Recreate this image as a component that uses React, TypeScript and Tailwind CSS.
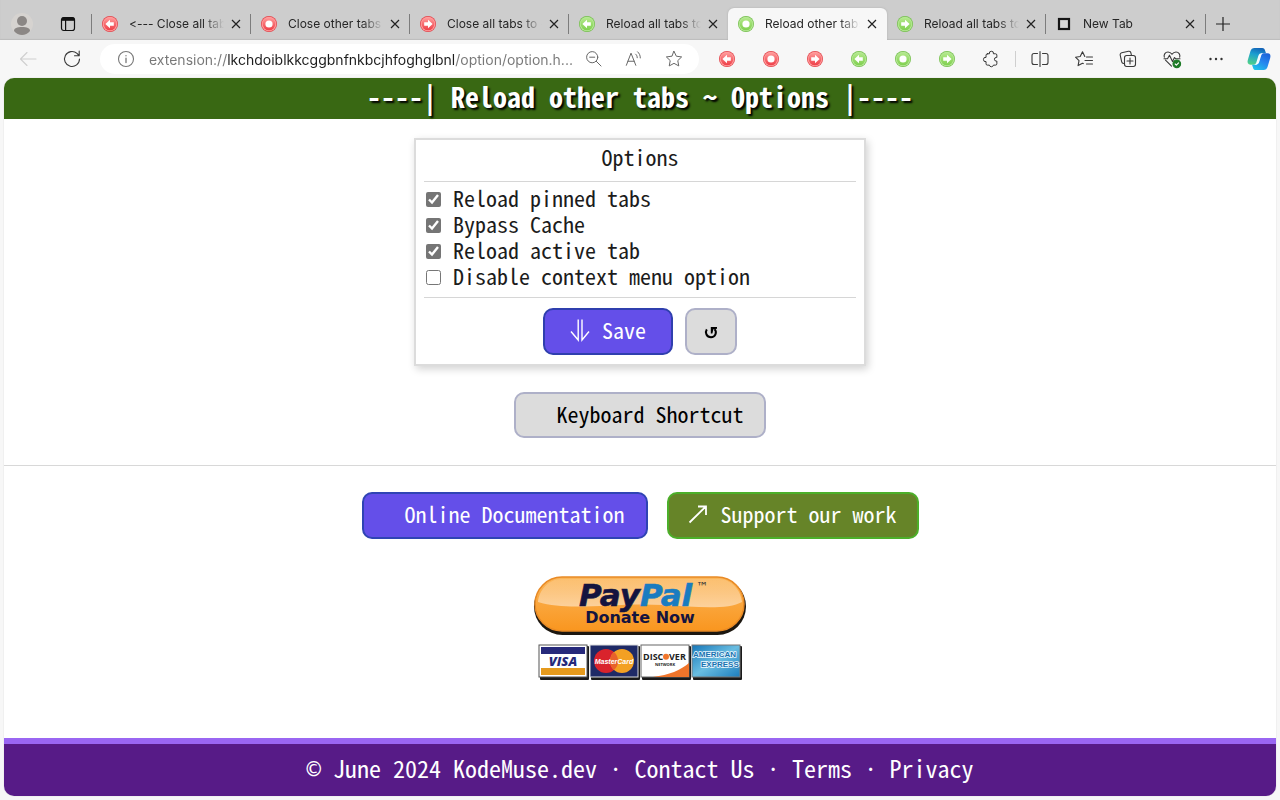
import { useId, useState } from 'react';
import type { ReactNode } from 'react';

type Shape = 'left' | 'dot' | 'right';

const tabs: { title: string; color?: 'red' | 'green'; shape?: Shape; active?: boolean }[] = [
  { title: '<--- Close all tabs', color: 'red', shape: 'left' },
  { title: 'Close other tabs', color: 'red', shape: 'dot' },
  { title: 'Close all tabs to --->', color: 'red', shape: 'right' },
  { title: 'Reload all tabs to left', color: 'green', shape: 'left' },
  { title: 'Reload other tabs', color: 'green', shape: 'dot', active: true },
  { title: 'Reload all tabs to right', color: 'green', shape: 'right' },
  { title: 'New Tab' },
];

const extensions: { name: string; color: 'red' | 'green'; shape: Shape }[] = [
  { name: 'Close all tabs to left', color: 'red', shape: 'left' },
  { name: 'Close other tabs', color: 'red', shape: 'dot' },
  { name: 'Close all tabs to right', color: 'red', shape: 'right' },
  { name: 'Reload all tabs to left', color: 'green', shape: 'left' },
  { name: 'Reload other tabs', color: 'green', shape: 'dot' },
  { name: 'Reload all tabs to right', color: 'green', shape: 'right' },
];

function Orb({ color, shape }: { color: 'red' | 'green'; shape: Shape }) {
  const id = useId();
  const red = color === 'red';
  return (
    <svg className="size-4 shrink-0" viewBox="0 0 16 16">
      <defs>
        <linearGradient id={id} x1="0" y1="0" x2="0" y2="1">
          <stop offset="0" stopColor={red ? '#ff9a9a' : '#b4e98c'} />
          <stop offset="1" stopColor={red ? '#ee3f48' : '#80d04f'} />
        </linearGradient>
      </defs>
      <circle cx="8" cy="8" r="8" fill={red ? '#e2434a' : '#74bf4b'} />
      <circle cx="8" cy="8" r="7.300" fill={red ? '#ff9c9c' : '#b5e796'} />
      <circle cx="8" cy="8" r="6.300" fill={`url(#${id})`} />
      {shape === 'dot' && <circle cx="8" cy="8" r="3.600" fill="#fff" />}
      {shape === 'left' && <path d="M3.400 8 8 3.700v2.500h3.800v3.600H8v2.500z" fill="#fff" />}
      {shape === 'right' && <path d="M12.600 8 8 3.700v2.500H4.200v3.600H8v2.500z" fill="#fff" />}
    </svg>
  );
}

function LineIcon({ children, className = 'size-5 text-[#3a3a3a]' }: { children: ReactNode; className?: string }) {
  return (
    <svg
      className={className}
      viewBox="0 0 20 20"
      fill="none"
      stroke="currentColor"
      strokeWidth="1.100"
      strokeLinecap="round"
      strokeLinejoin="round"
    >
      {children}
    </svg>
  );
}

function ToolButton({ label, children, className = 'w-11' }: { label: string; children: ReactNode; className?: string }) {
  return (
    <button aria-label={label} className={`flex h-8 shrink-0 items-center justify-center ${className}`}>
      {children}
    </button>
  );
}

function TabStrip() {
  return (
    <div className="flex h-10 items-end bg-[#cdcdcd] shadow-[inset_0_-1px_1px_#bdbdbd]">
      <ToolButton label="Profile">
        <svg className="size-[22px]" viewBox="0 0 22 22">
          <circle cx="11" cy="11" r="11" fill="#d6d3d0" />
          <circle cx="11" cy="8" r="5" fill="#8b8785" />
          <path d="M3 18c0-3 3-4 8-4s8 1 8 4c-2 2.600-5 4-8 4s-6-1.400-8-4z" fill="#8b8785" />
        </svg>
      </ToolButton>
      <ToolButton label="Tab actions" className="w-12">
        <svg className="size-4" viewBox="0 0 16 16" fill="none" stroke="#111" strokeWidth="1.200">
          <rect x="1.500" y="1.500" width="13" height="13" rx="2.200" />
          <path d="M2 3.200h12" strokeWidth="3.200" />
          <path d="M5.600 4v10.500" />
        </svg>
      </ToolButton>
      {tabs.map((tab, i) => (
        <div
          key={tab.title}
          className={`relative flex h-8 min-w-0 max-w-[159px] flex-1 items-center pr-[7px] pl-[10px] ${
            tab.active ? 'rounded-t-md bg-[#f7f7f7] shadow-[0_0_2px_#aaa] [clip-path:inset(-3px_-3px_0_-3px)]' : ''
          }`}
        >
          {!tab.active && !tabs[i - 1]?.active && <span className="absolute -left-px h-5 w-px bg-[#7c7c7c]" />}
          {tab.color && tab.shape ? (
            <Orb color={tab.color} shape={tab.shape} />
          ) : (
            <svg className="size-4 shrink-0" viewBox="0 0 16 16">
              <rect x="3" y="3" width="10" height="10" fill="#d8d8d8" stroke="#151515" strokeWidth="2.200" />
            </svg>
          )}
          <button className="ml-[11px] min-w-0 flex-1 overflow-hidden text-left text-[12px] whitespace-nowrap text-[#262626] [font-feature-settings:'calt'_0] [mask-image:linear-gradient(90deg,#000_78%,transparent)]">
            {tab.title}
          </button>
          <button aria-label={`Close ${tab.title}`} className="ml-1 flex size-4 items-center justify-center">
            <svg className="size-[10px]" viewBox="0 0 10 10" stroke="#222" strokeWidth="1.200">
              <path d="m1 1 8 8M9 1 1 9" />
            </svg>
          </button>
        </div>
      ))}
      <div className="relative flex h-8 w-9 items-center justify-center">
        <span className="absolute left-0 h-5 w-px bg-[#7c7c7c]" />
        <button aria-label="New tab">
          <svg className="size-[14px]" viewBox="0 0 14 14" stroke="#222" strokeWidth="1.200">
            <path d="M7 0v14M0 7h14" />
          </svg>
        </button>
      </div>
    </div>
  );
}

function Copilot() {
  return (
    <svg className="size-6" viewBox="0 0 24 24">
      <defs>
        <linearGradient id="copilotLeft" x1=".6" y1="0" x2=".3" y2="1">
          <stop offset="0" stopColor="#1464b8" />
          <stop offset=".4" stopColor="#1b9fd0" />
          <stop offset="1" stopColor="#4fd08a" />
        </linearGradient>
        <linearGradient id="copilotRight" x1=".9" y1="0" x2=".3" y2="1">
          <stop offset="0" stopColor="#1c5fd6" />
          <stop offset=".5" stopColor="#2584ee" />
          <stop offset="1" stopColor="#20c0ea" />
        </linearGradient>
      </defs>
      <path d="M7.500 1h7.800c1.400 0 2.200.8 2.600 2.100L19 6.300h-3.600c-1.600 0-2.400.9-2.900 2.400l-2.200 6.800c-.6 1.600-1.300 2.200-3 2.200H3.600C.9 17.700 0 15.700.8 13l2.700-9C4.200 2 5.300 1 7.500 1z" fill="url(#copilotLeft)" />
      <path d="M16.500 23H8.700c-1.400 0-2.200-.8-2.600-2.100L5 17.700h3.600c1.600 0 2.400-.9 2.900-2.400l2.200-6.800c.6-1.600 1.300-2.200 3-2.200h3.700c2.700 0 3.600 2 2.800 4.700l-2.700 9c-.7 2-1.800 3-4 3z" fill="url(#copilotRight)" />
      <path d="M11.300 9c.6-2 1.800-2.700 3.700-2.700h1.700c-1.500.2-2 .9-2.500 2.200l-2 6.500c-.6 2-1.800 2.700-3.700 2.700H6.800c1.500-.2 2-.9 2.500-2.200z" fill="#f4fbff" />
    </svg>
  );
}

function Toolbar() {
  const [url, setUrl] = useState('extension://lkchdoiblkkcggbnfnkbcjhfoghglbnl/option/option.h...');
  return (
    <div className="flex h-[38px] items-center">
      <ToolButton label="Back" className="w-14">
        <LineIcon className="size-5 text-[#cfcfcf]">
          <path d="M18 10H2.500M9 3.500 2.500 10 9 16.500" />
        </LineIcon>
      </ToolButton>
      <ToolButton label="Refresh" className="w-8">
        <LineIcon>
          <path d="M17.500 10A7.500 7.500 0 1 1 15 4.400L17 6.500M17.200 2v4.700h-4.700" />
        </LineIcon>
      </ToolButton>
      <div className="ml-3 flex h-[30px] min-w-0 flex-1 items-center rounded-full bg-white pr-[5px] pl-4">
        <LineIcon className="size-5 shrink-0 text-[#777]">
          <circle cx="10" cy="10" r="7.500" />
          <path d="M10 9.200v4.300M10 6.600v.2" strokeWidth="1.300" />
        </LineIcon>
        <input
          aria-label="Address"
          value={url}
          onChange={(e) => setUrl(e.target.value)}
          className="ml-[13px] min-w-0 flex-1 bg-[linear-gradient(90deg,#777_78px,#1d1d1d_78px,#1d1d1d_306px,#777_306px)] bg-clip-text text-[14px] text-transparent outline-none"
        />
        <ToolButton label="Zoom out" className="w-10">
          <LineIcon className="size-[18px] text-[#666]">
            <circle cx="8" cy="8" r="6.200" />
            <path d="m12.600 12.600 5.200 5.200M5.200 8h5.600" />
          </LineIcon>
        </ToolButton>
        <ToolButton label="Read aloud" className="w-10">
          <LineIcon className="size-[18px] text-[#666]">
            <path d="m1.500 17 5.200-13.500L12 17M3.200 12.500h7M11.800 4.600c1.200 1 1.800 2.300 1.800 4M14 2c2 1.700 3 4 3 6.800" />
          </LineIcon>
        </ToolButton>
        <ToolButton label="Add to favorites" className="w-10">
          <LineIcon className="size-[18px] text-[#666]">
            <path d="m10 1.500 2.600 5.400 5.900.8-4.300 4.100 1.100 5.900-5.300-2.900-5.300 2.900 1.100-5.900L1.500 7.700l5.900-.8z" />
          </LineIcon>
        </ToolButton>
      </div>
      <div className="ml-[6px] flex items-center">
        {extensions.map((ext) => (
          <ToolButton key={ext.name} label={ext.name}>
            <Orb color={ext.color} shape={ext.shape} />
          </ToolButton>
        ))}
        <ToolButton label="Extensions">
          <LineIcon className="size-[18px] text-[#333]">
            <path d="M6 4.200h2.200a2.300 2.300 0 1 1 4.500 0H15a1.500 1.500 0 0 1 1.500 1.500v2.600h-.7a1.900 1.900 0 0 0 0 4h.7v3A1.500 1.500 0 0 1 15 16.800h-2.300a2.300 2.300 0 0 1-4.500 0H6a1.500 1.500 0 0 1-1.500-1.500v-2.400a2.400 2.400 0 1 1 0-4.700V5.700A1.500 1.500 0 0 1 6 4.200z" />
          </LineIcon>
        </ToolButton>
        <span className="mx-[2px] h-4 w-px bg-[#cfcfcf]" />
        <ToolButton label="Split screen">
          <LineIcon>
            <path d="M10 2.500v15M7.500 4.500H4a2 2 0 0 0-2 2v7a2 2 0 0 0 2 2h3.500M12.500 4.500H16a2 2 0 0 1 2 2v7a2 2 0 0 1-2 2h-3.500" />
          </LineIcon>
        </ToolButton>
        <ToolButton label="Favorites">
          <LineIcon>
            <path d="M10.800 7.500 8.500 2.800 6.200 7.500l-4.700.7L5 11.600l-.9 5 4.400-2.400.8.4M12.500 8h6M11 11.500h7.500M12.500 15h6" />
          </LineIcon>
        </ToolButton>
        <ToolButton label="Collections">
          <LineIcon>
            <rect x="6.500" y="6.500" width="11" height="11" rx="2.200" />
            <path d="M12 9v6M9 12h6M6.500 14.500h-.8a2 2 0 0 1-2-1.600L2.200 6.200a2 2 0 0 1 1.500-2.400l6.800-1.500a2 2 0 0 1 2.400 1.500l.6 2.700" />
          </LineIcon>
        </ToolButton>
        <ToolButton label="Browser essentials">
          <LineIcon>
            <path d="M2.300 8.200C1.500 5.500 3.300 3 6 3c1.700 0 3 .9 4 2.300C11 3.900 12.300 3 14 3c2.700 0 4.500 2.500 3.700 5.200M3.500 11.200l6 6M2 9.700h3.500l2-3.500 3 6.300 2-4 1 1.200H18" />
            <circle cx="14.800" cy="14.800" r="3.800" fill="#1c7a26" stroke="#1c7a26" />
            <path d="m13.200 15 1.200 1.200 2.200-2.400" stroke="#fff" />
          </LineIcon>
        </ToolButton>
        <ToolButton label="Settings and more">
          <svg className="size-4 text-[#333]" viewBox="0 0 16 16" fill="currentColor">
            <circle cx="2.500" cy="8" r="1.200" />
            <circle cx="8" cy="8" r="1.200" />
            <circle cx="13.500" cy="8" r="1.200" />
          </svg>
        </ToolButton>
        <ToolButton label="Copilot" className="w-[42px]">
          <Copilot />
        </ToolButton>
      </div>
    </div>
  );
}

function PayPalBadge() {
  return (
    <svg className="h-[116px] w-[216px]" viewBox="0 0 216 116" role="img" aria-label="Donate with PayPal">
      <defs>
        <linearGradient id="pill" x1="0" y1="0" x2="0" y2="1">
          <stop offset="0" stopColor="#fbb65a" />
          <stop offset="1" stopColor="#f9961f" />
        </linearGradient>
        <linearGradient id="gloss" x1="0" y1="0" x2="0" y2="1">
          <stop offset="0" stopColor="#fff" stopOpacity=".15" />
          <stop offset="1" stopColor="#fff" stopOpacity=".5" />
        </linearGradient>
        <linearGradient id="amex" x1="0" y1="0" x2="1" y2="1">
          <stop offset="0" stopColor="#1676b8" />
          <stop offset=".5" stopColor="#69bde1" />
          <stop offset="1" stopColor="#1c7dbd" />
        </linearGradient>
      </defs>
      <rect x="2" y="4" width="212" height="57" rx="28.500" fill="#1c1710" />
      <rect x="3" y="3" width="209" height="54" rx="27" fill="url(#pill)" stroke="#e98a25" strokeWidth="1.500" />
      <path d="M29 5h158c12 0 22 11 23 23-14 8-46 5-78 3-50-3-93 7-126-3C7 16 17 5 29 5z" fill="url(#gloss)" />
      <text x="47" y="32" fontFamily="'DejaVu Sans', sans-serif" fontWeight="700" fontStyle="italic" fontSize="31" fill="#14143f" stroke="#14143f" strokeWidth=".6">
        Pay<tspan fill="#1a7cc0" stroke="#1a7cc0">Pal</tspan>
      </text>
      <text x="164" y="17" fontFamily="'DejaVu Sans', sans-serif" fontSize="12" fill="#333">™</text>
      <text x="108" y="49" textAnchor="middle" fontFamily="'DejaVu Sans', sans-serif" fontWeight="700" fontSize="16" fill="#14143f">
        Donate Now
      </text>

      {/* Visa */}
      <rect x="8" y="72" width="49" height="34" rx="1" fill="#1a1a1a" />
      <rect x="7" y="71" width="48" height="32" fill="#fff" stroke="#555" />
      <path d="M9 73h44v7H9z" fill="#26297b" />
      <path d="M9 94h44v7H9z" fill="#e59a1d" />
      <text x="31" y="92" textAnchor="middle" fontFamily="'Open Sans', sans-serif" fontWeight="800" fontStyle="italic" fontSize="13" fill="#26297b">VISA</text>

      {/* MasterCard */}
      <rect x="59" y="72" width="49" height="34" rx="1" fill="#1a1a1a" />
      <rect x="58" y="71" width="48" height="32" fill="#1f2a66" stroke="#ddd" />
      <circle cx="74" cy="87" r="12" fill="#d9232c" />
      <circle cx="90" cy="87" r="12" fill="#f3a023" />
      <path d="M82 78a12 12 0 0 1 0 18 12 12 0 0 1 0-18z" fill="#e8622a" />
      <text x="82" y="90" textAnchor="middle" fontFamily="'Liberation Sans', sans-serif" fontWeight="700" fontStyle="italic" fontSize="7" fill="#fff">MasterCard</text>

      {/* Discover */}
      <rect x="110" y="72" width="49" height="34" rx="1" fill="#1a1a1a" />
      <rect x="109" y="71" width="48" height="32" fill="#fff" stroke="#666" />
      <path d="M121 103c16-2 28-7 36-14v14z" fill="#f0752b" />
      <g fontFamily="'Open Sans', sans-serif" fontWeight="700" fill="#222">
        <text x="111" y="86" fontSize="9">DISC</text>
        <text x="137" y="86" fontSize="9">VER</text>
        <text x="133" y="92" fontSize="4" textAnchor="middle">NETWORK</text>
      </g>
      <circle cx="134" cy="82.800" r="3" fill="#f0752b" />

      {/* American Express */}
      <rect x="161" y="72" width="49" height="34" rx="1" fill="#1a1a1a" />
      <rect x="160" y="71" width="48" height="32" fill="url(#amex)" stroke="#777" />
      <g fontFamily="'Liberation Sans', sans-serif" fontWeight="700" fontSize="8" fill="#1872b0" stroke="#e8f6fd" strokeWidth="1.600" paintOrder="stroke">
        <text x="161" y="83">AMERICAN</text>
        <text x="169" y="93">EXPRESS</text>
      </g>
    </svg>
  );
}

const optionLabels = ['Reload pinned tabs', 'Bypass Cache', 'Reload active tab', 'Disable context menu option'];

function OptionsCard() {
  const [checked, setChecked] = useState([true, true, true, false]);
  const toggle = (i: number) => setChecked(checked.map((c, j) => (j === i ? !c : c)));

  return (
    <section className="w-full max-w-[452px] border-2 border-[#dcdcdc] bg-white px-2 shadow-[2px_3px_8px_rgba(0,0,0,0.18)]">
      <h2 className="pb-[9px] text-center leading-8">Options</h2>
      <hr className="border-[#d6d6d6]" />
      <div className="flex flex-col pt-1 pb-[7px]">
        {optionLabels.map((label, i) => (
          <label key={label} className="flex items-center gap-3 pl-[2px]">
            <input
              type="checkbox"
              checked={checked[i]}
              onChange={() => toggle(i)}
              className="size-[15px] accent-[#757575]"
            />
            <span className="pb-1 leading-[22px]">{label}</span>
          </label>
        ))}
      </div>
      <hr className="border-[#d6d6d6]" />
      <div className="flex justify-center gap-3 pt-[10px] pb-[9px]">
        <button className="flex h-[47px] w-[130px] items-center justify-center gap-3 rounded-[10px] border-2 border-[#2f3fae] bg-[#644fe9] pb-1 text-white">
          <svg className="h-6 w-5" viewBox="0 0 20 24" fill="none" stroke="currentColor" strokeWidth="1.400">
            <path d="M8.200 1.500V22L1 13.500M12 1.500V22l7-8.500" />
          </svg>
          Save
        </button>
        <button
          aria-label="Reset"
          className="flex h-[47px] w-[52px] items-center justify-center rounded-[10px] border-2 border-[#aeb0c8] bg-[#dcdcdc]"
        >
          <svg className="size-4" viewBox="0 0 16 16">
            <path d="M3.800 5.400C1.700 8.600 3.600 13.200 8 13.200s6.300-4.900 3.600-8" fill="none" stroke="#000" strokeWidth="2" />
            <path d="M7.800 3h6.200v1.800l-3.600.4-1 4.300H7.800z" fill="#000" />
          </svg>
        </button>
      </div>
    </section>
  );
}

export default function App() {
  return (
    <div className="flex min-h-screen flex-col bg-[#f7f7f7] font-['Inter',sans-serif]">
      <TabStrip />
      <Toolbar />
      <div className="mx-1 mb-1 flex flex-1 flex-col overflow-hidden rounded-[10px] bg-white font-['Noto_Sans_Mono_CJK_JP','Noto_Sans_Mono','DejaVu_Sans_Mono',monospace] text-[22px] text-[#1c1c1c] shadow-[0_0_1px_#bbb]">
        <header className="bg-[#396813] pb-1 text-center text-white">
          <h1 className="text-[28px] leading-[37px] font-bold [text-shadow:2px_2px_2px_#000]">
            ----| Reload other tabs ~ Options |----
          </h1>
        </header>

        <main className="flex flex-1 flex-col items-center pt-[19px]">
          <OptionsCard />
          <button className="mt-[26px] h-[46px] w-[252px] rounded-[10px] border-2 border-[#aeb0c8] bg-[#dcdcdc] pb-1 pl-5 text-black">
            Keyboard Shortcut
          </button>
          <hr className="mt-[27px] w-full border-[#d8d8d8]" />
          <div className="mt-[26px] flex gap-[19px]">
            <a
              href="#documentation"
              className="flex h-[47px] w-[286px] items-center justify-center rounded-[10px] border-2 border-[#2f44b4] bg-[#644fe9] pb-1 pl-5 text-white"
            >
              Online Documentation
            </a>
            <a
              href="#support"
              className="flex h-[47px] w-[252px] items-center justify-center gap-3 rounded-[10px] border-2 border-[#4caf2a] bg-[#668428] pb-1 text-white"
            >
              <svg className="size-5" viewBox="0 0 20 20" fill="none" stroke="currentColor" strokeWidth="1.800">
                <path d="M1.500 18.500 17.500 2.800M10 2.500h8V11" />
              </svg>
              Support our work
            </a>
          </div>
          <a href="#donate" className="mt-[35px]">
            <PayPalBadge />
          </a>
        </main>

        <footer className="border-t-[6px] border-[#9a66f2] bg-[#571b87] pt-[6px] pb-[10px] text-center text-[24px] leading-9 text-white">
          <span className="font-['DejaVu_Sans_Mono',monospace] leading-none">©</span> June 2024 KodeMuse.dev ·{' '}
          <a href="#contact">Contact Us</a> · <a href="#terms">Terms</a> · <a href="#privacy">Privacy</a>
        </footer>
      </div>
    </div>
  );
}
